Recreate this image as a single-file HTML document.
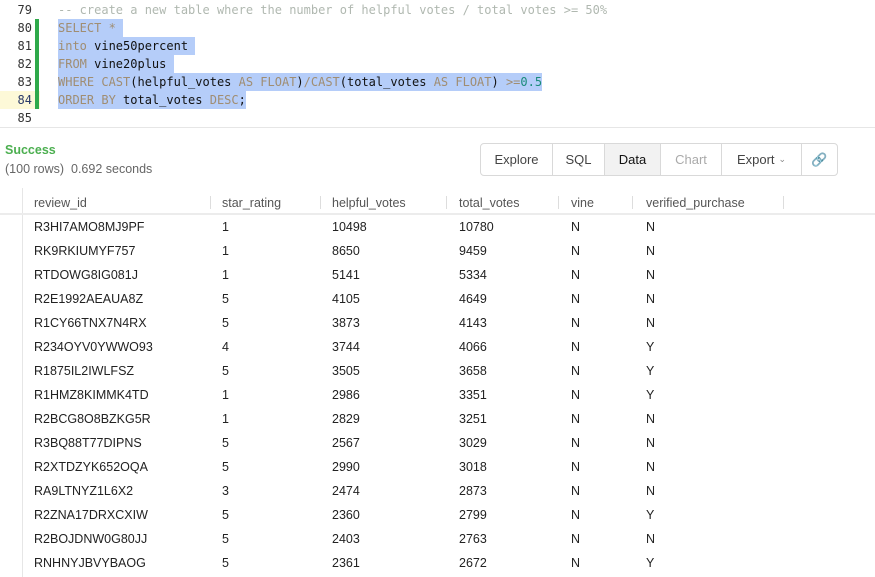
<!DOCTYPE html>
<html><head><style>
body{margin:0;width:875px;height:577px;overflow:hidden;background:#fff;font-family:"Liberation Sans",sans-serif;position:relative}
.ed{position:absolute;left:0;top:0;width:875px;height:127px;border-bottom:1px solid #e6e6e6}
.ln{position:absolute;left:0;width:40px;font:12px "DejaVu Sans Mono",monospace;color:#333;text-align:right;padding-right:0}
.cl{position:absolute;left:58px;font:12px "DejaVu Sans Mono",monospace;white-space:pre;line-height:18px;height:18px}
.sel{background:#b5cdf9}
.k{color:#a08d72}.c{color:#b0b8b0}.n{color:#1a8a7a}.t{color:#111}
.bar{position:absolute;left:35px;width:4px;background:#2ea94a}
.btns{position:absolute;left:480px;top:143px;height:31px;border:1px solid #d9d9d9;border-radius:4px;display:flex;font-size:13px;color:#444}
.btns div{border-right:1px solid #d9d9d9;display:flex;align-items:center;justify-content:center}
.h{position:absolute;top:196px;font-size:12.5px;color:#555}
.sep{position:absolute;top:196px;width:1px;height:13px;background:#ddd}
.r{position:absolute;font-size:12.5px;color:#222}
</style></head><body>
<div class="ed">
<div style="position:absolute;left:0;top:91px;width:40px;height:18px;background:#fdf9d8"></div>
<div class="bar" style="top:19px;height:90px"></div>
<div class="ln" style="top:3px;left:-8px">79</div>
<div class="ln" style="top:21px;left:-8px">80</div>
<div class="ln" style="top:39px;left:-8px">81</div>
<div class="ln" style="top:57px;left:-8px">82</div>
<div class="ln" style="top:75px;left:-8px">83</div>
<div class="ln" style="top:93px;left:-8px;color:#2a3a6a">84</div>
<div class="ln" style="top:111px;left:-8px">85</div>
<div class="cl c" style="top:1px">-- create a new table where the number of helpful votes / total votes &gt;= 50%</div>
<div class="cl sel" style="top:19px"><span class="k">SELECT *</span> </div>
<div class="cl sel" style="top:37px"><span class="k">into</span><span class="t"> vine50percent </span></div>
<div class="cl sel" style="top:55px"><span class="k">FROM</span><span class="t"> vine20plus</span> </div>
<div class="cl sel" style="top:73px"><span class="k">WHERE CAST</span><span class="t">(helpful_votes </span><span class="k">AS FLOAT</span><span class="t">)</span><span class="k">/CAST</span><span class="t">(total_votes </span><span class="k">AS FLOAT</span><span class="t">) </span><span class="k">&gt;=</span><span class="n">0.5</span></div>
<div class="cl sel" style="top:91px"><span class="k">ORDER BY</span><span class="t"> total_votes </span><span class="k">DESC</span><span class="t">;</span></div>
</div>
<div style="position:absolute;left:5px;top:143px;font-size:12.5px;font-weight:bold;color:#4caf50">Success</div>
<div style="position:absolute;left:5px;top:162px;font-size:12.5px;color:#666">(100 rows)&nbsp; 0.692 seconds</div>
<div class="btns">
<div style="width:71px">Explore</div>
<div style="width:51px">SQL</div>
<div style="width:55px;background:#f2f2f2;color:#111">Data</div>
<div style="width:60px;color:#aaa">Chart</div>
<div style="width:79px">Export <span style="font-size:9px;margin-left:4px;color:#888">&#8964;</span></div>
<div style="width:35px;border-right:none;color:#aaa">&#128279;</div>
</div>
<div style="position:absolute;left:22px;top:188px;width:1px;height:389px;background:#e6e6e6"></div>
<div style="position:absolute;left:0;top:213px;width:875px;height:2px;background:#ececec"></div>
<div class="h" style="left:34px">review_id</div>
<div class="h" style="left:222px">star_rating</div>
<div class="h" style="left:332px">helpful_votes</div>
<div class="h" style="left:459px">total_votes</div>
<div class="h" style="left:571px">vine</div>
<div class="h" style="left:646px">verified_purchase</div>
<div class="sep" style="left:210px"></div><div class="sep" style="left:320px"></div><div class="sep" style="left:446px"></div><div class="sep" style="left:558px"></div><div class="sep" style="left:632px"></div><div class="sep" style="left:783px"></div>
<div id="rows"></div>
<script>
var d=[["R3HI7AMO8MJ9PF",1,10498,10780,"N","N"],["RK9RKIUMYF757",1,8650,9459,"N","N"],["RTDOWG8IG081J",1,5141,5334,"N","N"],["R2E1992AEAUA8Z",5,4105,4649,"N","N"],["R1CY66TNX7N4RX",5,3873,4143,"N","N"],["R234OYV0YWWO93",4,3744,4066,"N","Y"],["R1875IL2IWLFSZ",5,3505,3658,"N","Y"],["R1HMZ8KIMMK4TD",1,2986,3351,"N","Y"],["R2BCG8O8BZKG5R",1,2829,3251,"N","N"],["R3BQ88T77DIPNS",5,2567,3029,"N","N"],["R2XTDZYK652OQA",5,2990,3018,"N","N"],["RA9LTNYZ1L6X2",3,2474,2873,"N","N"],["R2ZNA17DRXCXIW",5,2360,2799,"N","Y"],["R2BOJDNW0G80JJ",5,2403,2763,"N","N"],["RNHNYJBVYBAOG",5,2361,2672,"N","Y"]];
var x=[34,222,332,459,571,646],h="";
d.forEach(function(r,i){r.forEach(function(v,j){h+='<div class="r" style="left:'+x[j]+'px;top:'+(220+i*24)+'px">'+v+'</div>';});});
document.getElementById("rows").innerHTML=h;
</script>
</body></html>
